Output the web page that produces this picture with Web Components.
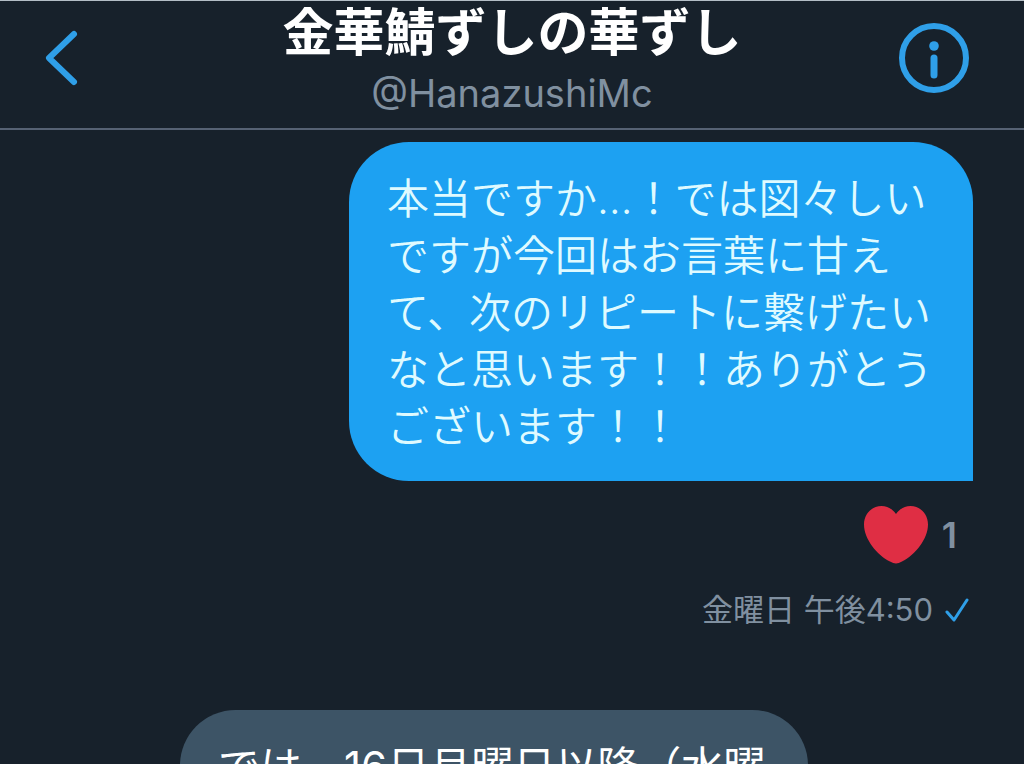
<!DOCTYPE html>
<html lang="ja">
<head>
<meta charset="utf-8">
<meta name="viewport" content="width=device-width, initial-scale=1">
<title>金華鯖ずしの華ずし</title>
<style>
  html { background: #17212b; }
  body {
    margin: 0;
    overflow: hidden;
    color: #fff;
    font-family: Inter, "Noto Sans CJK JP", sans-serif;
    --accent: #1da1f2;
    --icon: #2f9fe8;
    --muted: #8090a0;
    --line: #566274;
  }
</style>
</head>
<body>
<dm-conversation>
  <dm-header slot="header" name="金華鯖ずしの華ずし" handle="@HanazushiMc"></dm-header>
  <dm-message kind="sent">
    本当ですか…！では図々しいですが今回はお言葉に甘えて、次のリピートに繋げたいなと思います！！ありがとうございます！！
    <dm-reaction slot="footer" count="1"></dm-reaction>
    <dm-status slot="footer">金曜日 午後4:50</dm-status>
  </dm-message>
  <dm-message kind="received">では、16日月曜日以降（水曜</dm-message>
</dm-conversation>

<script>
class Base extends HTMLElement {
  constructor() {
    super();
    this.attachShadow({ mode: 'open' });
  }
  connectedCallback() {
    this.shadowRoot.innerHTML = this.render();
  }
}

customElements.define('dm-conversation', class extends Base {
  render() {
    return `<style>
      :host { display: block; border-top: 1px solid #b4bec6; box-sizing: border-box; min-height: 100vh; }
      main { display: flex; flex-direction: column; gap: 79px; padding: 12px 51px 40px; }
    </style>
    <slot name="header"></slot>
    <main><slot></slot></main>`;
  }
});

customElements.define('dm-header', class extends Base {
  render() {
    return `<style>
      :host { display: block; border-bottom: 2px solid var(--line); }
      header { display: grid; grid-template-columns: 96px 1fr 96px; align-items: start; height: 127px; padding: 0 40px; box-sizing: border-box; }
      button { appearance: none; border: 0; background: none; padding: 0; margin: 20px 0 0; height: 74px; display: flex; align-items: center; cursor: pointer; color: var(--icon); }
      .info { justify-content: flex-end; padding-right: 14px; }
      svg { display: block; fill: none; stroke: currentColor; }
      .who { text-align: center; white-space: nowrap; }
      h1 { margin: 0; font-size: 51px; line-height: 64px; font-weight: 700; }
      p { margin: 0; font-size: 38px; line-height: 56px; color: var(--muted); }
    </style>
    <header>
      <button class="back" aria-label="戻る">
        <svg width="44" height="60" viewBox="0 0 44 60"><path d="M34 6 9 30l25 24" stroke-width="6" stroke-linecap="round" stroke-linejoin="round"/></svg>
      </button>
      <div class="who"><h1>${this.getAttribute('name')}</h1><p>${this.getAttribute('handle')}</p></div>
      <button class="info" aria-label="会話の情報">
        <svg width="72" height="72" viewBox="0 0 72 72"><circle cx="36" cy="36" r="32" stroke-width="6"/><circle cx="36" cy="24" r="4.8" fill="currentColor" stroke="none"/><path d="M36 36v17" stroke-width="7" stroke-linecap="round"/></svg>
      </button>
    </header>`;
  }
});

customElements.define('dm-message', class extends Base {
  render() {
    return `<style>
      :host { display: flex; flex-direction: column; }
      :host([kind="sent"]) { align-items: flex-end; }
      :host([kind="received"]) { align-items: flex-start; padding-left: 129px; }
      .bubble {
        box-sizing: border-box; width: 100%; max-width: 624px;
        padding: 28px 38px 26px; border-radius: 60px;
        font-size: 42px; line-height: 57px; font-weight: 350;
      }
      p { margin: 0; }
      :host([kind="sent"]) .bubble { background: var(--accent); color: #dffaff; border-bottom-right-radius: 0; }
      :host([kind="received"]) .bubble { max-width: 628px; background: #3d5466; color: #fff; border-bottom-left-radius: 0; font-weight: 400; }
    </style>
    <div class="bubble"><p><slot></slot></p></div>
    <slot name="footer"></slot>`;
  }
});

customElements.define('dm-reaction', class extends Base {
  render() {
    return `<style>
      :host { display: flex; margin-top: 20px; }
      button { appearance: none; border: 0; background: none; display: flex; align-items: center; gap: 12px; padding: 0 16px 0 0; height: 68px; color: var(--muted); font: 600 36px/68px Inter, sans-serif; cursor: pointer; }
      svg { display: block; }
    </style>
    <button aria-label="いいね ${this.getAttribute('count')}">
      <svg width="66" height="60" viewBox="0 0 66 60"><path d="M32 9C28 3.500 23 1 17.500 1 8 1 0 9 0 19.500 0 34 13 50 26 56.500c4.500 2.500 7.500 2.500 12 0C51 50 64 34 64 19.500 64 9 56 1 46.500 1 41 1 36 3.500 32 9Z" fill="#df2e44"/></svg>
      <span>${this.getAttribute('count')}</span>
    </button>`;
  }
});

customElements.define('dm-status', class extends Base {
  render() {
    return `<style>
      :host { display: flex; align-items: center; gap: 12px; margin-top: 20px; padding-right: 4px; font-size: 31px; line-height: 42px; color: var(--muted); }
      svg { display: block; }
    </style>
    <span><slot></slot></span>
    <svg width="24" height="26" viewBox="0 0 24 26" role="img" aria-label="送信済み"><path d="M2 15l7 8L22 3" fill="none" stroke="#2f9fe8" stroke-width="3" stroke-linecap="round" stroke-linejoin="round"/></svg>`;
  }
});
</script>
</body>
</html>
